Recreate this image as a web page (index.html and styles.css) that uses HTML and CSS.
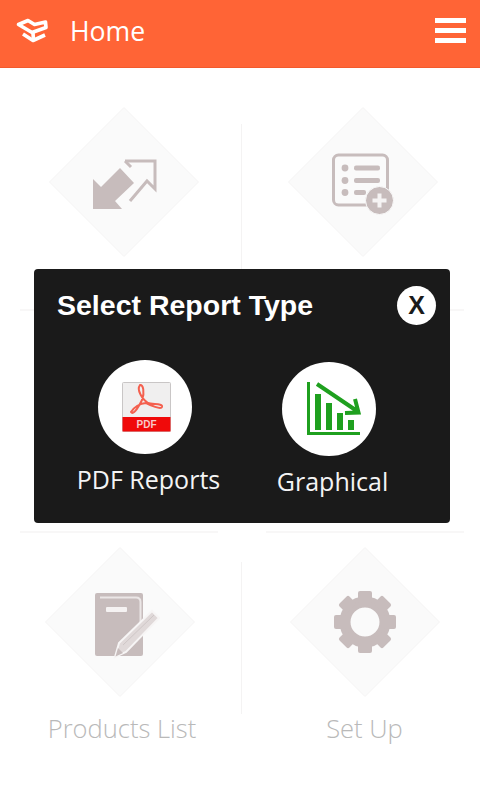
FILE: index.html
```html
<!DOCTYPE html>
<html>
    <head>
        <title>Home</title>
        <link rel="stylesheet" href="styles.css">
    </head>
    <body>
        <div class="topbar">
            <svg class="box-icon" viewBox="15 20 34 28">
                <path d="M18.5 27.5 L28 23.5 L34.5 27.5 L45.5 25 L46 30.5 L32 35.5 Z"/>
                <path d="M23 37 L33 43.5 L45 38"/>
                <path d="M33 36 L33.5 43"/>
            </svg>
            <span class="topbar-title">Home</span>
            <div class="hamburger">
                <span></span>
                <span></span>
                <span></span>
            </div>
        </div>

        <div class="menu">
            <!-- first row -->
            <div class="row row-first">
                <div class="cell cell-left">
                    <svg class="tile tile-transfer" viewBox="49 107 150 150">
                        <polygon class="diamond" points="124,107.5 198.5,182 124,256.5 49.5,182"/>
                        <polygon class="solid" points="93,179 93,209 122,209 115,201 134,183 120,168 101,187"/>
                        <path class="line" d="M125 161 H155 V189 L147 181 L130 201"/>
                        <path class="line" d="M125 161 L131 167"/>
                    </svg>
                </div>
                <div class="vline vline-first"></div>
                <div class="cell cell-right">
                    <svg class="tile tile-list" viewBox="288 106 150 150">
                        <polygon class="diamond" points="363,106.5 437.5,181 363,255.5 288.5,181"/>
                        <rect class="line" x="333.5" y="154" width="54" height="50" rx="5"/>
                        <circle class="solid" cx="345" cy="167" r="3.4"/>
                        <circle class="solid" cx="345" cy="179.5" r="3.4"/>
                        <circle class="solid" cx="345" cy="191.5" r="3.4"/>
                        <rect class="solid" x="354" y="164.5" width="26" height="5" rx="2"/>
                        <rect class="solid" x="354" y="177" width="26" height="5" rx="2"/>
                        <rect class="solid" x="354" y="189" width="12" height="5" rx="2"/>
                        <circle class="solid ringed" cx="379.5" cy="199.5" r="14"/>
                        <path class="plus" d="M379.5 192.5 V206.5 M372.5 199.5 H386.5"/>
                    </svg>
                </div>
            </div>

            <!-- second row sits behind the dialog -->
            <div class="row row-second">
                <div class="cell cell-left"></div>
                <div class="cell cell-right"></div>
            </div>

            <div class="row row-third">
                <div class="cell cell-left">
                    <svg class="tile tile-book" viewBox="45 547 150 150">
                        <polygon class="diamond" points="120,547.5 194.5,622 120,696.5 45.5,622"/>
                        <rect class="solid" x="95" y="593" width="48" height="63" rx="2"/>
                        <path class="book-line" d="M100 597.5 H136 Q140.5 597.5 140.5 602 V628"/>
                        <rect class="book-label" x="106" y="607" width="21" height="5" rx="1"/>
                        <polygon class="pencil" points="115,657 119,643 152,611 159,618 126,652"/>
                        <path class="pencil-line" d="M123 645 L154 615"/>
                        <polygon class="solid" points="115.5,656.5 118,648 123,653"/>
                    </svg>
                    <span class="tile-label">Products List</span>
                </div>
                <div class="vline vline-third"></div>
                <div class="cell cell-right">
                    <svg class="tile tile-gear" viewBox="290 547 150 150">
                        <polygon class="diamond" points="365,547.5 439.5,622 365,696.5 290.5,622"/>
                        <circle class="gear-ring" cx="365" cy="622" r="20"/>
                        <g class="solid">
                            <rect x="358" y="591" width="14" height="12" rx="2"/>
                            <rect x="358" y="591" width="14" height="12" rx="2" transform="rotate(45 365 622)"/>
                            <rect x="358" y="591" width="14" height="12" rx="2" transform="rotate(90 365 622)"/>
                            <rect x="358" y="591" width="14" height="12" rx="2" transform="rotate(135 365 622)"/>
                            <rect x="358" y="591" width="14" height="12" rx="2" transform="rotate(180 365 622)"/>
                            <rect x="358" y="591" width="14" height="12" rx="2" transform="rotate(225 365 622)"/>
                            <rect x="358" y="591" width="14" height="12" rx="2" transform="rotate(270 365 622)"/>
                            <rect x="358" y="591" width="14" height="12" rx="2" transform="rotate(315 365 622)"/>
                        </g>
                    </svg>
                    <span class="tile-label">Set Up</span>
                </div>
            </div>
        </div>

        <div class="dialog">
            <div class="dialog-head">
                <span class="dialog-title">Select Report Type</span>
                <span class="dialog-close">X</span>
            </div>
            <div class="dialog-options">
                <div class="option">
                    <div class="option-circle">
                        <svg class="option-icon" viewBox="98 360 94 94">
                            <rect class="pdf-page" x="122.5" y="382.5" width="48" height="49" rx="1"/>
                            <path class="pdf-swirl" d="M140 385 C136 390 143 400 148 403 C152 405 163 403 162 407 C161 410 150 405 146 403 C140 403 133 408 131 412 C133 415 137 410 142 400 C145 392 143 384 140 385 Z"/>
                            <rect class="pdf-band" x="122.5" y="417" width="48" height="14.5"/>
                            <text class="pdf-text" x="146.5" y="428">PDF</text>
                        </svg>
                    </div>
                    <span class="option-label">PDF Reports</span>
                </div>
                <div class="option option-low">
                    <div class="option-circle">
                        <svg class="option-icon" viewBox="282 362 94 94">
                            <g class="chart-bars">
                                <rect x="307" y="382" width="3" height="53"/>
                                <rect x="307" y="432" width="53" height="3"/>
                                <rect x="315" y="394" width="6" height="36"/>
                                <rect x="326" y="403" width="6" height="27"/>
                                <rect x="337" y="413" width="6" height="17"/>
                                <rect x="348" y="420" width="6" height="10"/>
                            </g>
                            <path class="chart-arrow" d="M317 384 L357 411 M355 399 L358.5 412.5 L345 413"/>
                        </svg>
                    </div>
                    <span class="option-label">Graphical</span>
                </div>
            </div>
        </div>
    </body>
</html>
```

FILE: styles.css
```css
body {
    margin: 0;
    background-color: white;
    font-family: "Open Sans", sans-serif;
}

/* Orange bar on top */
.topbar {
    display: flex;
    align-items: center;
    height: 62px;
    padding: 0 14px 5px 15px;
    background-color: #ff6436;
    border-bottom: 1px solid #f25a2d;
}

.box-icon {
    width: 34px;
    height: 28px;
    fill: none;
    stroke: white;
    stroke-width: 3.6;
    stroke-linejoin: round;
    margin-right: 21px;
    filter: blur(0.5px);
}

.topbar-title {
    flex: 1;
    color: white;
    font-size: 26.6px;
}

.hamburger {
    display: flex;
    flex-direction: column;
    gap: 5px;
    width: 31px;
    margin-bottom: 2px;
}

.hamburger span {
    height: 5px;
    background-color: white;
}

/* Tiles */
.menu {
    padding-top: 20px;
}

.row {
    display: grid;
    grid-template-columns: 241px 1px 238px;
    box-sizing: border-box;
}

.row-first,
.row-second {
    position: relative;
}

.row-first {
    height: 223px;
    padding-top: 19px;
}

.row-second {
    height: 222px;
}

.row-third {
    padding-top: 14px;
}

/* Rows are split by two short lines */
.row-first::before,
.row-first::after,
.row-second::before,
.row-second::after {
    content: "";
    position: absolute;
    bottom: 0;
    height: 2px;
    width: 198px;
    background-color: #f8f7f7;
}

.row-first::before,
.row-second::before {
    left: 20px;
}

.row-first::after,
.row-second::after {
    left: 266px;
}

.cell {
    display: flex;
    flex-direction: column;
    align-items: center;
}

.cell-left {
    padding-left: 3px;
}

.cell-right {
    padding-left: 7px;
}

.row-second .cell-right {
    grid-column: 3;
}

.tile {
    width: 150px;
    height: 150px;
}

.tile-transfer {
    margin-left: 4px;
}

.tile-list {
    margin-left: -3px;
}

.tile-book {
    margin-left: -4px;
}

.vline {
    width: 1px;
    background-color: #f4f3f3;
}

.vline-first {
    margin-top: 17px;
}

.vline-third {
    margin-top: 15px;
    height: 152px;
}

.tile-label {
    margin-top: 13px;
    color: #b9b9b9;
    font-size: 25.5px;
    font-weight: 300;
    line-height: 36px;
}

/* Icon parts */
.diamond {
    fill: #fafafa;
    stroke: #f5f4f4;
    stroke-width: 1;
}

.solid {
    fill: #c7bcbc;
}

.line {
    fill: none;
    stroke: #c7bcbc;
    stroke-width: 3;
}

.ringed {
    stroke: #fafafa;
    stroke-width: 1;
}

.plus {
    fill: none;
    stroke: #f5f3f3;
    stroke-width: 4;
}

.book-line {
    fill: none;
    stroke: #ebe6e6;
    stroke-width: 2;
}

.book-label {
    fill: #f5f2f2;
}

.pencil {
    fill: #e0d9d9;
    stroke: #f7f5f5;
    stroke-width: 2;
}

.pencil-line {
    fill: none;
    stroke: #cfc7c7;
    stroke-width: 1;
}

.gear-ring {
    fill: none;
    stroke: #c7bcbc;
    stroke-width: 11;
}

/* Report type dialog */
.dialog {
    position: absolute;
    top: 269px;
    left: 34px;
    width: 416px;
    height: 254px;
    background-color: #1a1a1a;
    border-radius: 4px;
}

.dialog-head {
    display: flex;
    align-items: center;
    justify-content: space-between;
    padding: 17px 14px 0 23px;
}

.dialog-title {
    color: white;
    font-family: "Liberation Sans", sans-serif;
    font-weight: bold;
    font-size: 28.5px;
}

.dialog-close {
    display: flex;
    align-items: center;
    justify-content: center;
    width: 39px;
    height: 39px;
    border-radius: 50%;
    background-color: white;
    color: #1a1a1a;
    font-family: "Liberation Sans", sans-serif;
    font-weight: bold;
    font-size: 25px;
}

.dialog-options {
    display: grid;
    grid-template-columns: 184px 184px;
    padding: 35px 0 0 19px;
}

.option {
    display: flex;
    flex-direction: column;
    align-items: center;
}

.option-low {
    margin-top: 2px;
}

.option-circle {
    width: 94px;
    height: 94px;
    border-radius: 50%;
    background-color: white;
}

.option-icon {
    display: block;
    width: 94px;
    height: 94px;
}

.option-label {
    margin: 8px 0 0 7px;
    color: #f4f4f4;
    font-size: 25px;
    line-height: 34px;
}

.pdf-page {
    fill: #f0efef;
    stroke: #c9c6c6;
    stroke-width: 1;
}

.pdf-swirl {
    fill: none;
    stroke: #f4604f;
    stroke-width: 2;
}

.pdf-band {
    fill: #f00a0a;
}

.pdf-text {
    fill: #f7c9c9;
    font-family: "Liberation Sans", sans-serif;
    font-weight: bold;
    font-size: 10px;
    text-anchor: middle;
}

.chart-bars {
    fill: #1fa01f;
}

.chart-arrow {
    fill: none;
    stroke: #1fa01f;
    stroke-width: 4;
}
```
